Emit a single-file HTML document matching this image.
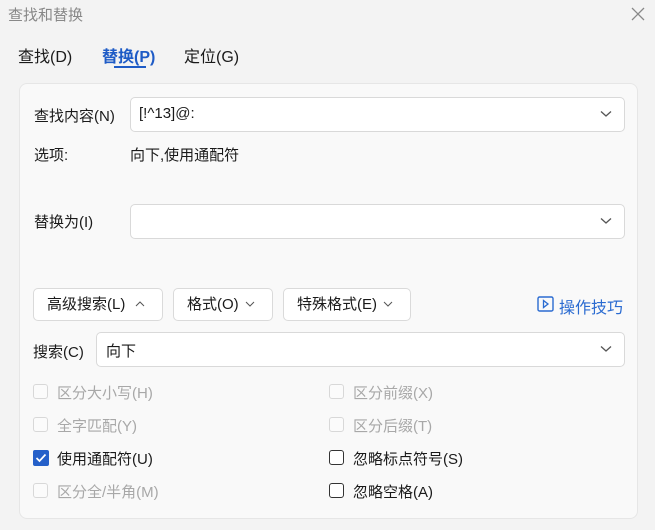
<!DOCTYPE html><html><head><meta charset="utf-8"><style>
*{box-sizing:border-box;margin:0;padding:0}
body{width:655px;height:530px;background:#f3f3f3;font-family:"Liberation Sans","Noto Sans CJK SC",sans-serif;font-size:15px;color:#1a1a1a;position:relative;overflow:hidden}
.a{position:absolute;white-space:nowrap}
.panel{position:absolute;left:19px;top:83px;width:619px;height:436px;background:#f9f9f9;border:1px solid #e6e6e6;border-radius:8px}
.inp{position:absolute;background:#fff;border:1px solid #d9d9d9;border-radius:5px}
.btn{position:absolute;background:#fff;border:1px solid #dadada;border-radius:5px;height:33px;line-height:31px;padding-left:13px}
.cb{position:absolute;width:15px;height:15px;border:1px solid #d8d8d8;border-radius:3px;background:#fbfbfb}
.cb.on{border-color:#333;background:#fff}
.dis{color:#a8a8a8}
</style></head><body>
<div class="a" style="left:8px;top:4px;color:#888;font-size:15px">查找和替换</div>
<svg class="a" style="left:631px;top:7px" width="14" height="14"><path d="M1 1L13 13M13 1L1 13" stroke="#888" stroke-width="1.3"/></svg>
<div class="a" style="left:18px;top:43px;font-size:16px">查找(D)</div>
<div class="a" style="left:102px;top:43px;font-size:16px;color:#1e5bc6;font-weight:bold">替换(P)</div>
<div class="a" style="left:114px;top:66px;width:32px;height:2px;background:#1e5bc6"></div>
<div class="a" style="left:184px;top:43px;font-size:16px">定位(G)</div>
<div class="panel"></div>
<div class="a" style="left:34px;top:105px">查找内容(N)</div>
<div class="inp" style="left:130px;top:97px;width:495px;height:35px"></div>
<div class="a" style="left:139px;top:105px">[!^13]@:</div>
<svg class="a" style="left:600px;top:110px" width="12" height="8"><path d="M1 1.5L6 6L11 1.5" stroke="#555" fill="none" stroke-width="1.3"/></svg>
<div class="a" style="left:34px;top:144px">选项:</div>
<div class="a" style="left:130px;top:144px">向下,使用通配符</div>
<div class="a" style="left:34px;top:211px">替换为(I)</div>
<div class="inp" style="left:130px;top:204px;width:495px;height:35px"></div>
<svg class="a" style="left:600px;top:217px" width="12" height="8"><path d="M1 1.5L6 6L11 1.5" stroke="#555" fill="none" stroke-width="1.3"/></svg>
<div class="btn" style="left:33px;top:288px;width:130px">高级搜索(L) <svg width="10" height="6" style="margin-left:5px;vertical-align:2px"><path d="M1 5L5 1L9 5" stroke="#555" fill="none"/></svg></div>
<div class="btn" style="left:173px;top:288px;width:100px">格式(O) <svg width="10" height="6" style="margin-left:2px;vertical-align:2px"><path d="M1 1L5 5L9 1" stroke="#555" fill="none"/></svg></div>
<div class="btn" style="left:283px;top:288px;width:128px">特殊格式(E) <svg width="10" height="6" style="margin-left:2px;vertical-align:2px"><path d="M1 1L5 5L9 1" stroke="#555" fill="none"/></svg></div>
<svg class="a" style="left:537px;top:296px" width="17" height="16"><rect x="1" y="1" width="15" height="14" rx="1.5" stroke="#2a6bd1" fill="none" stroke-width="1.4"/><path d="M6.5 4.5L11 8L6.5 11.5Z" stroke="#2a6bd1" fill="none" stroke-width="1.3"/></svg>
<div class="a" style="left:559px;top:294px;color:#2a6bd1;font-size:16px">操作技巧</div>
<div class="a" style="left:33px;top:341px">搜索(C)</div>
<div class="inp" style="left:96px;top:332px;width:529px;height:35px"></div>
<div class="a" style="left:106px;top:340px">向下</div>
<svg class="a" style="left:600px;top:345px" width="12" height="8"><path d="M1 1.5L6 6L11 1.5" stroke="#555" fill="none" stroke-width="1.3"/></svg>
<div class="cb" style="left:33px;top:384px"></div><div class="a dis" style="left:57px;top:382px">区分大小写(H)</div>
<div class="cb" style="left:33px;top:417px"></div><div class="a dis" style="left:57px;top:415px">全字匹配(Y)</div>
<div class="a" style="left:33px;top:450px;width:16px;height:16px;background:#2560c9;border-radius:2px"><svg width="16" height="16"><path d="M3.5 8L6.5 11L12.5 4.5" stroke="#fff" fill="none" stroke-width="1.7"/></svg></div><div class="a" style="left:57px;top:448px">使用通配符(U)</div>
<div class="cb" style="left:33px;top:483px"></div><div class="a dis" style="left:57px;top:481px">区分全/半角(M)</div>
<div class="cb" style="left:329px;top:384px"></div><div class="a dis" style="left:353px;top:382px">区分前缀(X)</div>
<div class="cb" style="left:329px;top:417px"></div><div class="a dis" style="left:353px;top:415px">区分后缀(T)</div>
<div class="cb on" style="left:329px;top:450px"></div><div class="a" style="left:353px;top:448px">忽略标点符号(S)</div>
<div class="cb on" style="left:329px;top:483px"></div><div class="a" style="left:353px;top:481px">忽略空格(A)</div>
</body></html>
